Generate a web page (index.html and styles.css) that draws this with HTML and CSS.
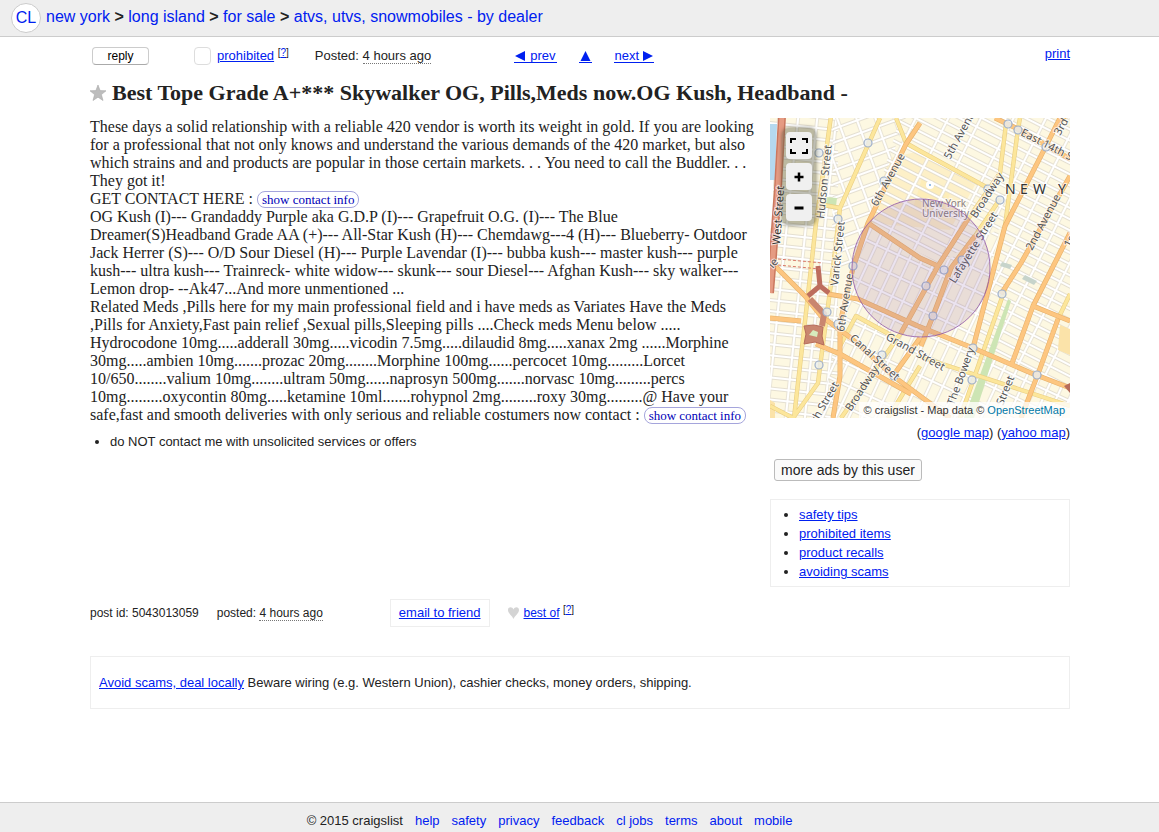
FILE: index.html
```html
<!DOCTYPE html>
<html lang="en">
<head>
<meta charset="utf-8">
<title>craigslist posting</title>
<link rel="stylesheet" href="styles.css">
</head>
<body>
<header class="topbar">
  <a class="logo" href="#">CL</a>
  <nav class="crumbs"><a href="#">new york</a> <b>&gt;</b> <a href="#">long island</a> <b>&gt;</b> <a href="#">for sale</a> <b>&gt;</b> <a href="#">atvs, utvs, snowmobiles - by dealer</a></nav>
</header>

<main class="page">
  <div class="tools">
    <button class="reply" type="button">reply</button>
    <div class="flag">
      <button class="flagbox" type="button" aria-label="flag as prohibited"></button>
      <span><a href="#">prohibited</a> <sup>[<a href="#">?</a>]</sup></span>
    </div>
    <p class="posted">Posted: <time class="dotted">4 hours ago</time></p>
    <nav class="pager">
      <a class="icon-link" href="#"><svg width="11" height="10" viewBox="0 0 11 10"><path d="M0 5 10 0v10z"/></svg><span>prev</span></a>
      <a class="icon-link" href="#" aria-label="up"><svg width="11" height="10" viewBox="0 0 11 10"><path d="M5.500 0 10.500 10H.5z"/></svg></a>
      <a class="icon-link" href="#"><span>next</span><svg width="10" height="10" viewBox="0 0 10 10"><path d="M0 0 10 5 0 10z"/></svg></a>
    </nav>
    <a class="print" href="#">print</a>
  </div>

  <h1 class="title">
    <svg class="star" width="16" height="16" viewBox="0 0 16 16"><path d="M8 0l2.100 5.600 5.900.2-4.600 3.800L13 15.500 8 12.200 3 15.500l1.600-5.900L0 5.800l5.900-.2z" fill="#bdbdbd" stroke="#a9a9a9" stroke-width=".6"/></svg>
    <span>Best Tope Grade A+*** Skywalker OG, Pills,Meds now.OG Kush, Headband -</span>
  </h1>

  <div class="columns">
    <section class="posting">
      <div class="copy">These days a solid relationship with a reliable 420 vendor is worth its weight in gold. If you are looking for a professional that not only knows and understand the various demands of the 420 market, but also which strains and and products are popular in those certain markets. . . You need to call the Buddler. . . They got it!<br>
GET CONTACT HERE : <button class="contact" type="button">show contact info</button><br>
OG Kush (I)--- Grandaddy Purple aka G.D.P (I)--- Grapefruit O.G. (I)--- The Blue Dreamer(S)Headband Grade AA (+)--- All-Star Kush (H)--- Chemdawg---4 (H)--- Blueberry- Outdoor Jack Herrer (S)--- O/D Sour Diesel (H)--- Purple Lavendar (I)--- bubba kush--- master kush--- purple kush--- ultra kush--- Trainreck- white widow--- skunk--- sour Diesel--- Afghan Kush--- sky walker--- Lemon drop- --Ak47...And more unmentioned ...<br>
Related Meds ,Pills here for my main professional field and i have meds as Variates Have the Meds ,Pills for Anxiety,Fast pain relief ,Sexual pills,Sleeping pills ....Check meds Menu below .....<br>
Hydrocodone 10mg.....adderall 30mg.....vicodin 7.5mg.....dilaudid 8mg.....xanax 2mg ......Morphine 30mg.....ambien 10mg.......prozac 20mg........Morphine 100mg......percocet 10mg.........Lorcet 10/650........valium 10mg........ultram 50mg......naprosyn 500mg.......norvasc 10mg.........percs 10mg.........oxycontin 80mg.....ketamine 10ml.......rohypnol 2mg.........roxy 30mg.........@ Have your safe,fast and smooth deliveries with only serious and reliable costumers now contact : <button class="contact" type="button">show contact info</button></div>
      <ul class="notices"><li>do NOT contact me with unsolicited services or offers</li></ul>
    </section>

    <aside class="side">
      <div class="map">
        <svg class="tiles" viewBox="0 0 300 300" preserveAspectRatio="xMidYMid slice" role="img" aria-label="Map of lower Manhattan">
          <defs>
            <pattern id="west" width="19" height="11" patternUnits="userSpaceOnUse" patternTransform="rotate(6)"><path d="M0 5H19M9 0V11" stroke="#ddd8cb" stroke-width="3.400"/><path d="M0 5H19M9 0V11" stroke="#fff" stroke-width="2.200"/></pattern>
            <pattern id="village" width="18" height="13" patternUnits="userSpaceOnUse" patternTransform="rotate(-20)"><path d="M0 6H18M9 0V13" stroke="#ddd8cb" stroke-width="3.400"/><path d="M0 6H18M9 0V13" stroke="#fff" stroke-width="2.200"/></pattern>
            <pattern id="east" width="29" height="10" patternUnits="userSpaceOnUse" patternTransform="rotate(27)"><path d="M0 4H29M14 0V10" stroke="#ddd8cb" stroke-width="3.400"/><path d="M0 4H29M14 0V10" stroke="#fff" stroke-width="2.200"/></pattern>
            <pattern id="south" width="12" height="20" patternUnits="userSpaceOnUse" patternTransform="rotate(25)"><path d="M0 10H12M6 0V20" stroke="#ddd8cb" stroke-width="3.400"/><path d="M0 10H12M6 0V20" stroke="#fff" stroke-width="2.200"/></pattern>
            <g id="roads" fill="none" stroke-linejoin="round">
              <path d="M61-2 55 41 46 105 41 150 33 221 24 300M110 0 70 90 63 150 51 241 48 265 23 300M48 86 70 90M126 0 136 25 150 33 218 70M236 6 230 55 198 101M250 0 248 11 235 108M230 81 205 118M236 168 196 283 190 300M70 228 86 198 128 221M148 238 300 288M131 215 71 300M150 248 118 300M0 288 23 300M300 176 288 201"/>
            </g>
            <g id="mains" fill="none" stroke-linejoin="round">
              <path d="M150 5 136 26 98 105 83 150 70 205 70 258 63 300M98 105 150 140 168 148M291-2 276 28 235 108 224 150 203 230M198 101 168 148 131 215M205 118 181 150 163 198 151 228M300 58 251 145 231 176M300 115 263 188 241 248M225 0 248 11 300 41M58 176 88 181 148 208 203 230 261 255 300 270M263 188 300 203M288 201 268 256 251 300M5 148 35 178 51 198 81 220 123 258 180 300M0 200 31 203M46 226 70 236 141 276M150 220 123 258M300-8 291 3"/>
            </g>
          </defs>
          <rect width="300" height="300" fill="#fdf8e2"/>
          <path d="M120 40 150 33 205 67 180 112 98 105z" fill="#fdf0c8"/>
          <path d="M152 60 180 76 168 102 143 90z" fill="#fdedb9"/>
          <path d="M0 0H68V300H0z" fill="url(#west)"/>
          <path d="M63 0H136L98 105 83 150H62z" fill="url(#village)"/>
          <path d="M130 0H300V270L205 230 235 108 168 145 98 105z" fill="url(#east)"/>
          <path d="M98 105 168 148 230 110 203 230 300 270V300H50L70 200z" fill="url(#south)"/>
          <path d="M0 6H7L5 62H0z" fill="#b5d9ef"/>
          <path d="M3 62V110H0V62z" fill="#fff"/>
          <path d="M56 79 67 80 66 88 54 86zM238 181 241 183 204 300H194z" fill="#cde5b4"/>
          <path d="M255 157 267 163 264 167 252 161zM232 144 242 147 240 151 230 148z" fill="#c7d4cb"/>
          <path d="M290 207 300 211V237L288 232zM0 282 5 285V300H0z" fill="#fbe3a9"/>
          <use href="#roads" stroke="#e9ce83" stroke-width="4.400"/>
          <use href="#roads" stroke="#fce69b" stroke-width="3.200"/>
          <use href="#mains" stroke="#e7b16a" stroke-width="5"/>
          <use href="#mains" stroke="#fdc680" stroke-width="3.800"/>
          <path d="M12-2 8 70 3 138 0 175" fill="none" stroke="#cb785f" stroke-width="8"/>
          <path d="M12-2 8 70 3 138 0 175" fill="none" stroke="#e59b82" stroke-width="5"/>
          <path d="M48 148 50 168 38 178M50 168 59 175" fill="none" stroke="#bd6d5e" stroke-width="5"/>
          <path d="M40 181 54 196 52 208" fill="none" stroke="#c9866f" stroke-width="6"/>
          <path d="M34 208 44 207 53 209 52 218 54 227 45 224 34 226 36 216z" fill="#c9866f" stroke="#b76c5b"/>
          <path d="M39 217 43 212 48 214 47 219z" fill="#d7ecbd"/>
          <path d="M8 141 53 145M8 147 50 151" stroke="#da7b6b" stroke-dasharray="3 2"/>
          <path d="M294 268 300 265V275z" fill="#b76c5b"/>
          <g fill="#e9edf0" fill-opacity=".8" stroke="#9eafc9" stroke-width="1.200">
            <circle cx="98" cy="25" r="4"/><circle cx="49" cy="35" r="4"/><circle cx="114" cy="63" r="4"/><circle cx="68" cy="101" r="4"/><circle cx="83" cy="148" r="4"/><circle cx="238" cy="6" r="4"/><circle cx="248" cy="12" r="4"/><circle cx="276" cy="29" r="4"/><circle cx="218" cy="71" r="4"/><circle cx="230" cy="82" r="4"/><circle cx="192" cy="142" r="4"/><circle cx="174" cy="152" r="4"/><circle cx="156" cy="168" r="4"/><circle cx="163" cy="198" r="4"/><circle cx="57" cy="194" r="4"/><circle cx="68" cy="206" r="4"/><circle cx="49" cy="247" r="4"/><circle cx="112" cy="237" r="4"/><circle cx="124" cy="258" r="4"/><circle cx="232" cy="176" r="4"/><circle cx="203" cy="230" r="4"/><circle cx="202" cy="262" r="4"/><circle cx="267" cy="257" r="4"/>
          </g>
          <circle cx="160" cy="67" r="4" fill="#fff"/><circle cx="160" cy="67" r="1" fill="#78a9d8"/>
          <g class="labels">
            <text transform="translate(10 127) rotate(-86)" class="strong">West Street</text>
            <text transform="translate(54 101) rotate(-84)">Hudson Street</text>
            <text transform="translate(68 168) rotate(-84)">Varick Street</text>
            <text transform="translate(107 89) rotate(-61)">6th Avenue</text>
            <text transform="translate(74 214) rotate(-81)">6th Avenue</text>
            <text transform="translate(180 42) rotate(-61)">5th Avenue</text>
            <text transform="translate(250 17) rotate(27)">East 14th Street</text>
            <text transform="translate(290 18) rotate(-60)">3rd Avenue</text>
            <text transform="translate(206 101) rotate(-57)">Broadway</text>
            <text transform="translate(185 166) rotate(-58)">Lafayette Street</text>
            <text transform="translate(262 133) rotate(-62)">2nd Avenue</text>
            <text transform="translate(300 130) rotate(-62)">1st Avenue</text>
            <text transform="translate(79 221) rotate(42)">Canal Street</text>
            <text transform="translate(115 221) rotate(29)">Grand Street</text>
            <text transform="translate(81 294) rotate(-57)">Broadway</text>
            <text transform="translate(184 288) rotate(-70)">The Bowery</text>
            <text transform="translate(233 288) rotate(-68)">Street</text>
            <text transform="translate(47 305) rotate(-60)">th Street</text>
            <text transform="translate(3 151) rotate(-50)">le</text>
            <text x="152" y="89" class="place">New York</text>
            <text x="152" y="99" class="place">University</text>
            <text y="76" class="city"><tspan x="235">N</tspan><tspan x="250">E</tspan><tspan x="263">W</tspan><tspan x="288">Y</tspan></text>
          </g>
          <circle cx="151" cy="150" r="69" fill="#8050a0" fill-opacity=".16" stroke="#8f55a8" stroke-opacity=".8"/>
        </svg>
        <div class="zoomer">
          <button type="button" aria-label="full screen"><svg width="18" height="16" viewBox="0 0 18 16"><path d="M1 5V1H6M12 1H17V5M17 11V15H12M6 15H1V11" fill="none" stroke="#000" stroke-width="2"/></svg></button>
          <button type="button" aria-label="zoom in"><svg width="10" height="10" viewBox="0 0 10 10"><path d="M5 .5V9.500M.5 5H9.500" stroke="#000" stroke-width="2.500"/></svg></button>
          <button type="button" aria-label="zoom out"><svg width="10" height="10" viewBox="0 0 10 10"><path d="M.5 5H9.500" stroke="#000" stroke-width="3"/></svg></button>
        </div>
        <div class="credit">© craigslist - Map data © <a href="#">OpenStreetMap</a></div>
      </div>
      <p class="maplinks">(<a href="#">google map</a>) (<a href="#">yahoo map</a>)</p>
      <button class="more" type="button">more ads by this user</button>
      <ul class="tips">
        <li><a href="#">safety tips</a></li>
        <li><a href="#">prohibited items</a></li>
        <li><a href="#">product recalls</a></li>
        <li><a href="#">avoiding scams</a></li>
      </ul>
    </aside>
  </div>

  <div class="info">
    <span class="small">post id: 5043013059</span>
    <span class="small posted-at">posted: <time class="dotted">4 hours ago</time></span>
    <a class="email" href="#">email to friend</a>
    <span class="best"><svg width="11" height="12" viewBox="0 0 11 12"><path d="M5.500 12C4.500 9 0 6.500 0 3 0-.5 4.500-.5 5.500 2.600 6.500-.5 11-.5 11 3 11 6.500 6.500 9 5.500 12z" fill="#d4d4d4"/></svg><span><a href="#">best of</a> <sup>[<a href="#">?</a>]</sup></span></span>
  </div>

  <p class="warning"><a href="#">Avoid scams, deal locally</a> Beware wiring (e.g. Western Union), cashier checks, money orders, shipping.</p>
</main>

<footer class="footer">
  <span>© 2015 craigslist</span>
  <a href="#">help</a><a href="#">safety</a><a href="#">privacy</a><a href="#">feedback</a><a href="#">cl jobs</a><a href="#">terms</a><a href="#">about</a><a href="#">mobile</a>
</footer>
</body>
</html>
```
FILE: styles.css
```css
* { box-sizing: border-box; }
body {
  margin: 0;
  min-height: 100vh;
  display: flex;
  flex-direction: column;
  background: #fff;
  color: #222;
  font: 13px/16px "Liberation Sans", Arial, sans-serif;
}
a { color: #0020f0; }
p, ul, h1 { margin: 0; padding: 0; }
button { font-family: inherit; cursor: pointer; }
sup { font-size: 10px; line-height: 0; vertical-align: 4px; }

.topbar {
  display: flex;
  align-items: center;
  gap: 5px;
  height: 37px;
  padding: 0 11px 2px;
  background: #eee;
  border-bottom: 1px solid #ccc;
  font-size: 16px;
  line-height: 20px;
}
.topbar a { text-decoration: none; }
.logo {
  display: flex;
  align-items: center;
  justify-content: center;
  width: 30px;
  height: 30px;
  margin-top: 2px;
  border: 1px solid #ccc;
  border-radius: 50%;
  background: #fff;
}

.page {
  width: 100%;
  max-width: 981px;
  margin: 0 auto;
  padding-left: 1px;
}
.tools {
  display: flex;
  align-items: center;
  height: 38px;
  padding-left: 2px;
}
.reply {
  width: 57px;
  height: 18px;
  padding: 0;
  border: 1px solid #ccc;
  border-bottom-color: #aaa;
  border-radius: 4px;
  background: #fff;
  color: #000;
  font-size: 12px;
  line-height: 16px;
}
.flag { display: flex; align-items: center; gap: 6px; margin-left: 45px; }
.flagbox {
  width: 17px;
  height: 18px;
  padding: 0;
  border: 1px solid #ddd;
  border-radius: 4px;
  background: #fff;
}
.posted { margin-left: 26px; }
.dotted { border-bottom: 1px dotted #777; }
.pager { display: flex; margin-left: 83px; gap: 22px; }
.icon-link {
  display: flex;
  align-items: center;
  gap: 4px;
  height: 14px;
  padding: 0 1px;
  border-bottom: 1px solid;
  text-decoration: none;
}
.icon-link svg { fill: #0020f0; }
.print { margin-left: auto; padding-bottom: 5px; }

.title {
  display: flex;
  align-items: center;
  gap: 6px;
  height: 36px;
  font: bold 22px/26px "Liberation Serif", "Times New Roman", serif;
}
.star { flex: none; }

.columns {
  display: grid;
  grid-template-columns: minmax(0, 1fr) 300px;
  column-gap: 14px;
  margin-top: 7px;
}
.copy { font: 16px/18px "Liberation Serif", "Times New Roman", serif; }
.contact {
  height: 17px;
  padding: 0 4px;
  border: 1px solid #a5a5dc;
  border-radius: 8px;
  background: #fff;
  color: #0000b8;
  font-size: 13px;
  line-height: 15px;
  vertical-align: baseline;
  margin: -2px 0;
}
.notices { margin-top: 10px; padding-left: 20px; }

.map { position: relative; height: 300px; overflow: hidden; }
.tiles { display: block; width: 100%; height: 100%; }
.labels {
  fill: #555;
  stroke: #fff;
  stroke-opacity: .7;
  stroke-width: 2px;
  paint-order: stroke;
  font: 11px "Noto Sans", sans-serif;
}
.labels .strong { fill: #333; }
.labels .place { fill: #8a7f80; font-size: 10px; }
.labels .city { fill: #333; font-size: 14px; }
.zoomer {
  position: absolute;
  left: 12px;
  top: 10px;
  display: grid;
  gap: 4px;
  padding: 4px;
  border-radius: 7px;
  background: rgba(90, 90, 65, .4);
  box-shadow: 0 0 4px rgba(60, 60, 40, .6);
}
.zoomer button {
  display: grid;
  place-items: center;
  width: 26px;
  height: 27px;
  padding: 0;
  border: 0;
  border-radius: 4px;
  background: #f0f0f0;
}
.credit {
  position: absolute;
  right: 0;
  bottom: 0;
  padding: 0 5px;
  background: rgba(255, 255, 255, .75);
  color: #333;
  font-size: 11px;
  line-height: 16px;
}
.credit a { color: #0078a8; text-decoration: none; }
.maplinks { margin-top: 7px; text-align: right; }
.more {
  margin: 18px 0 0 4px;
  height: 22px;
  padding: 0 6px;
  border: 1px solid #bbb;
  border-radius: 3px;
  background: #fafafa;
  color: #222;
  font-size: 14px;
  line-height: 20px;
}
.tips {
  margin-top: 18px;
  padding: 5px 0 5px 28px;
  border: 1px solid #eee;
  line-height: 19px;
}

.info { display: flex; align-items: center; margin-top: 12px; }
.small { font-size: 12px; }
.posted-at { margin-left: 18px; }
.email { margin-left: 67px; padding: 5px 8px; border: 1px solid #eee; }
.best { display: flex; align-items: center; gap: 5px; margin-left: 18px; font-size: 12px; }
.warning { margin: 29px 0 24px; padding: 18px 8px 17px; border: 1px solid #eee; }

.footer {
  display: flex;
  justify-content: center;
  flex-wrap: wrap;
  gap: 12px;
  margin-top: auto;
  padding: 10px 60px 3px 0;
  border-top: 1px solid #ccc;
  background: #eee;
}
.footer a { text-decoration: none; }
```
